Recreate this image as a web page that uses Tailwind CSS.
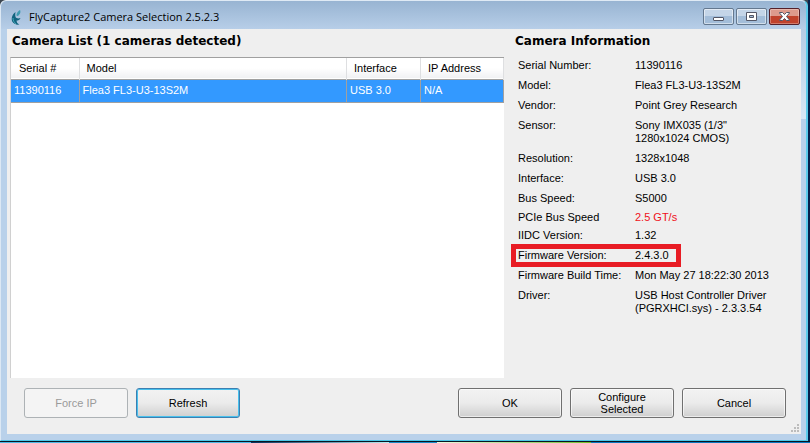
<!DOCTYPE html>
<html lang="en">
<head>
<meta charset="UTF-8" /><meta name="viewport" content="width=device-width, initial-scale=1.0"/>
<title>FlyCapture2 Camera Selection</title><script src="https://cdn.jsdelivr.net/npm/@tailwindcss/browser@4"></script>
</head>
<body class="flex h-screen flex-col overflow-hidden bg-[#3c4650] font-['Liberation_Sans',sans-serif] text-[11px] leading-[13px] text-black">
<div class="flex min-h-0 flex-1 border-b border-[#0a1420]">
<div class="relative flex min-w-0 flex-1 flex-col rounded-t-md border-t border-r-2 border-b border-l border-t-[#dfeaf5] border-r-[#5ccbea] border-b-[#4cc8e8] border-l-[#dce8f4] bg-[#b9d1ea] pr-[5px] pb-[6px] pl-[6px]">
<span class="absolute top-[28px] right-0 h-[90px] w-[5px] bg-linear-to-b from-[#b5cce4] to-[#d8e8f6]"></span>

<!-- title bar -->
<header class="-mr-[5px] -ml-[6px] flex h-[28px] shrink-0 items-start justify-between rounded-t-md bg-linear-to-b from-[#98b4d2] to-[#b7cee8] pr-[6px] pl-[10px]">
<div class="flex items-center gap-[7px] pt-[7px]">
<svg class="h-[17px] w-[11px]" viewBox="0 0 11 17" aria-hidden="true"><path d="M9 1C7 2 5.500 4 5.400 6.500C6.500 7.500 8 6.500 9 4.500C9.600 3.200 9.500 2 9 1Z" fill="#3f9bb0"/><path d="M4.500 3C1.200 5.500 0 9.500 1.200 12.500C2.500 15 5.500 16 8.500 15.500C6.500 14.800 5.600 13.500 5.600 11.500C7.200 11.500 8.800 11 9.500 9C7.500 9.800 5.300 9.500 4.600 8C4.200 6.800 4.100 5 4.500 3Z" fill="#12647f"/><path d="M2 9C2 11.500 3 13.500 5 14.800" fill="none" stroke="#49a9bb"/></svg>
<h1 class="font-['Open_Sans',sans-serif] text-[11px] leading-[18px]">FlyCapture2 Camera Selection 2.5.2.3</h1>
</div>
<div class="flex gap-[2px] pt-[7px]">
<button type="button" aria-label="Minimize" class="flex h-[17px] w-[31px] items-center justify-center rounded-[2px] border border-[#64788f] bg-linear-to-b from-[#c4d5e8] from-50% to-[#a3bdd9] to-50% inset-ring inset-ring-white/50"><svg class="h-[11px] w-[13px]" viewBox="0 0 13 11"><rect x="1.500" y="6.500" width="10" height="3" rx=".5" fill="#fff" stroke="#535666"/></svg></button>
<button type="button" aria-label="Maximize" class="flex h-[17px] w-[31px] items-center justify-center rounded-[2px] border border-[#64788f] bg-linear-to-b from-[#c4d5e8] from-50% to-[#a3bdd9] to-50% inset-ring inset-ring-white/50"><svg class="h-[11px] w-[13px]" viewBox="0 0 13 11"><path d="M1.500 1.500H11.500V9.500H1.500ZM4.500 4.500V6.500H8.500V4.500Z" fill="#fff" fill-rule="evenodd" stroke="#535666"/></svg></button>
<button type="button" aria-label="Close" class="flex h-[17px] w-[31px] items-center justify-center rounded-[2px] border border-[#54202a] bg-linear-to-b from-[#dd9a8c] from-50% to-[#c0422c] to-50% inset-ring inset-ring-white/30"><svg class="h-[11px] w-[13px]" viewBox="0 0 13 11"><path d="M1.500 1.500H4.500L6.500 3.500L8.500 1.500H11.500V2L8.500 5.500L11.500 9V9.500H8.500L6.500 7.500L4.500 9.500H1.500V9L4.500 5.500L1.500 2Z" fill="#fff" stroke="#535666"/></svg></button>
</div>
</header>

<main class="relative flex min-h-0 flex-1 flex-col bg-[#efefef] pl-[3px]">
<div class="flex min-h-0 flex-1">
<section class="flex min-w-0 flex-1 flex-col">
<h2 class="pt-[4px] pb-[7px] pl-[2px] font-['DejaVu_Sans',sans-serif] text-[12px] leading-[17px] font-bold">Camera List (1 cameras detected)</h2>
<div class="flex-1 border-t border-l border-t-[#a0a0a0] border-l-[#d0d0d0] bg-white">
<table class="w-full table-fixed border-collapse text-left">
<colgroup><col class="w-[68px]"><col><col class="w-[74px]"><col class="w-[83px]"></colgroup>
<thead><tr class="h-[21px] border-b border-[#a0a0a0] bg-linear-to-b from-white from-50% to-[#f0f1f3]">
<th class="border-r border-[#dedfe1] pl-[8px] font-normal">Serial #</th><th class="border-r border-[#dedfe1] pl-[7px] font-normal">Model</th><th class="border-r border-[#dedfe1] pl-[7px] font-normal">Interface</th><th class="border-r border-[#dedfe1] pl-[7px] font-normal">IP Address</th>
</tr></thead>
<tbody><tr class="h-[23px] border-b border-[#a0a0a0] bg-[#3399ff] text-white">
<td class="border-r border-[#a0a0a0] pl-[3px]">11390116</td><td class="border-r border-[#a0a0a0] pl-[3px]">Flea3 FL3-U3-13S2M</td><td class="border-r border-[#a0a0a0] pl-[3px]">USB 3.0</td><td class="border-r border-[#a0a0a0] pl-[3px]">N/A</td>
</tr></tbody>
</table>
</div>
</section>

<section class="w-[297px] shrink-0 pl-[11px]">
<h2 class="pt-[4px] pb-[9px] font-['DejaVu_Sans',sans-serif] text-[12px] leading-[17px] font-bold">Camera Information</h2>
<dl class="pl-[3px]">
<div class="flex pb-[7px]"><dt class="w-[117px]">Serial Number:</dt><dd>11390116</dd></div>
<div class="flex pb-[7px]"><dt class="w-[117px]">Model:</dt><dd>Flea3 FL3-U3-13S2M</dd></div>
<div class="flex pb-[7px]"><dt class="w-[117px]">Vendor:</dt><dd>Point Grey Research</dd></div>
<div class="flex pb-[7px]"><dt class="w-[117px]">Sensor:</dt><dd>Sony IMX035 (1/3"<br>1280x1024 CMOS)</dd></div>
<div class="flex pb-[7px]"><dt class="w-[117px]">Resolution:</dt><dd>1328x1048</dd></div>
<div class="flex pb-[7px]"><dt class="w-[117px]">Interface:</dt><dd>USB 3.0</dd></div>
<div class="flex pb-[6px]"><dt class="w-[117px]">Bus Speed:</dt><dd>S5000</dd></div>
<div class="flex pb-[5px]"><dt class="w-[117px]">PCIe Bus Speed</dt><dd class="text-[#f01020]">2.5 GT/s</dd></div>
<div class="flex pb-[7px]"><dt class="w-[117px]">IIDC Version:</dt><dd>1.32</dd></div>
<div class="relative flex pb-[7px]"><dt class="w-[117px]">Firmware Version:</dt><dd>2.4.3.0</dd><span class="absolute -top-[5px] -left-[7px] h-[23px] w-[170px] border-[5px] border-[#e81c24]"></span></div>
<div class="flex pb-[7px]"><dt class="w-[117px]">Firmware Build Time:</dt><dd>Mon May 27 18:22:30 2013</dd></div>
<div class="flex"><dt class="w-[117px]">Driver:</dt><dd>USB Host Controller Driver<br>(PGRXHCI.sys) - 2.3.3.54</dd></div>
</dl>
</section>
</div>

<footer class="flex gap-[8px] pt-[10px] pr-[15px] pb-[16px] pl-[14px]">
<button type="button" disabled class="h-[30px] w-[104px] rounded-[3px] border border-[#adb2b5] bg-[#f4f4f4] text-[#9a9a9a]">Force IP</button>
<button type="button" class="h-[30px] w-[104px] rounded-[3px] border border-[#3c7fb1] bg-linear-to-b from-[#f2f2f2] via-[#ebebeb] via-50% to-[#cfcfcf] inset-ring inset-ring-[#48c0ec]">Refresh</button>
<button type="button" class="ml-auto h-[30px] w-[104px] rounded-[3px] border border-[#707070] bg-linear-to-b from-[#f2f2f2] via-[#ebebeb] via-50% to-[#cfcfcf] inset-ring inset-ring-white/60">OK</button>
<button type="button" class="h-[30px] w-[104px] rounded-[3px] border border-[#707070] bg-linear-to-b from-[#f2f2f2] via-[#ebebeb] via-50% to-[#cfcfcf] leading-[12px] inset-ring inset-ring-white/60">Configure<br>Selected</button>
<button type="button" class="h-[30px] w-[104px] rounded-[3px] border border-[#707070] bg-linear-to-b from-[#f2f2f2] via-[#ebebeb] via-50% to-[#cfcfcf] inset-ring inset-ring-white/60">Cancel</button>
</footer>
<svg class="absolute right-[2px] bottom-[2px] h-[8px] w-[8px]" viewBox="0 0 8 8" aria-hidden="true"><path d="M6 0h2v2h-2zM3 3h2v2h-2zM6 3h2v2h-2zM0 6h2v2h-2zM3 6h2v2h-2zM6 6h2v2h-2z" fill="#bcbcbc"/></svg>
</main>
</div>
<div class="w-[2px] shrink-0 bg-[#06204c]"></div>
</div>

<!-- sliver of desktop below the window -->
<div class="flex h-px shrink-0">
<div class="w-[31%] bg-[#4cb8e4]"></div>
<div class="w-[17%] bg-linear-to-r from-[#06305c] to-[#b8f0f4]"></div>
<div class="w-[6%] bg-[#1a8cc8]"></div>
<div class="w-[19%] bg-linear-to-r from-[#e8fce0] to-[#6cc020]"></div>
<div class="flex-1 bg-[#0a78c0]"></div>
</div>
</body></html>
